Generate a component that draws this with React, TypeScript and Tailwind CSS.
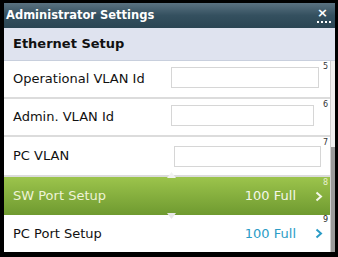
import React from "react";

const font = { fontFamily: '"DejaVu Sans", "Liberation Sans", sans-serif' };

function Chevron({ color }: { color: string }) {
  return (
    <svg width="8" height="11" viewBox="0 0 8 11" className="shrink-0">
      <polyline points="1.5,1.5 6,5.5 1.5,9.5" fill="none" stroke={color} strokeWidth="2" />
    </svg>
  );
}

function InputRow({ label, num, h, inputCls }: { label: string; num: string; h: string; inputCls: string }) {
  return (
    <div className={`relative flex items-center border-b-2 border-[#dcdcdc] bg-white ${h}`}>
      <span className="pl-[9px] text-[13px] text-[#111]">{label}</span>
      <div className={`absolute border border-[#d6d6d6] bg-white ${inputCls}`} />
      <span className="absolute right-[2px] top-[2px] text-[8px] leading-none text-[#333]">{num}</span>
    </div>
  );
}

export default function App() {
  return (
    <div className="h-[257px] w-[338px] bg-black pb-[5px] pl-[4px] pr-[3px] pt-[3px]" style={font}>
      <div className="flex h-full flex-col bg-white">
        <div className="relative flex h-[25px] items-center bg-gradient-to-b from-[#5a7281] via-[#34505f] to-[#2a4553] pl-[2px]">
          <span className="text-[11.5px] font-bold text-white">Administrator Settings</span>
          <span className="absolute right-[7px] top-[3px] text-[13px] font-bold leading-none text-white">×</span>
          <span className="absolute right-[4px] top-[18px] flex gap-[2px]">
            <i className="h-[2px] w-[2px] bg-white" />
            <i className="h-[2px] w-[2px] bg-white" />
            <i className="h-[2px] w-[2px] bg-white" />
            <i className="h-[2px] w-[2px] bg-white" />
          </span>
        </div>
        <div className="flex h-[33px] items-center border-b border-[#c8cfdd] bg-[#dfe3ef] pl-[9px]">
          <span className="text-[13px] font-bold text-[#111]">Ethernet Setup</span>
        </div>
        <div className="flex flex-1">
          <div className="relative flex flex-1 flex-col">
            <InputRow label="Operational VLAN Id" num="5" h="h-[38px]" inputCls="left-[167px] top-[6px] h-[21px] w-[148px]" />
            <InputRow label="Admin. VLAN Id" num="6" h="h-[38px]" inputCls="left-[167px] top-[6px] h-[21px] w-[143px]" />
            <InputRow label="PC VLAN" num="7" h="h-[40px]" inputCls="left-[170px] top-[9px] h-[21px] w-[147px]" />
            <div className="relative flex h-[38px] items-center bg-gradient-to-b from-[#9cc44c] to-[#6f9a30] pl-[9px] pr-[7px]">
              <span className="flex-1 text-[13px] text-[#eef3d6]">SW Port Setup</span>
              <span className="mr-[19px] text-[13px] text-[#f4f7ea]">100 Full</span>
              <Chevron color="#f4f7ea" />
              <span className="absolute right-[2px] top-[2px] text-[8px] leading-none text-[#e8f0d0]">8</span>
            </div>
            <div className="relative flex h-[37px] items-center bg-white pl-[9px] pr-[7px]">
              <span className="flex-1 text-[13px] text-[#111]">PC Port Setup</span>
              <span className="mr-[19px] text-[13px] text-[#2b9cc6]">100 Full</span>
              <Chevron color="#2b9cc6" />
              <span className="absolute right-[2px] top-[1px] text-[8px] leading-none text-[#222]">9</span>
            </div>
            <svg className="absolute left-[163px] top-[111px]" width="9" height="6" viewBox="0 0 9 6">
              <polygon points="4.5,0 9,6 0,6" fill="#f2f2f2" />
            </svg>
            <svg className="absolute left-[163px] top-[152px]" width="9" height="6" viewBox="0 0 9 6">
              <polygon points="0,0 9,0 4.5,6" fill="#e8e8e8" />
            </svg>
          </div>
          <div className="flex w-[5px] flex-col border-l border-[#cfcfcf] bg-[#f0f0f0]">
            <div className="h-[86px]" />
            <div className="flex-1 bg-[#9a9a9a]" />
          </div>
        </div>
      </div>
    </div>
  );
}
